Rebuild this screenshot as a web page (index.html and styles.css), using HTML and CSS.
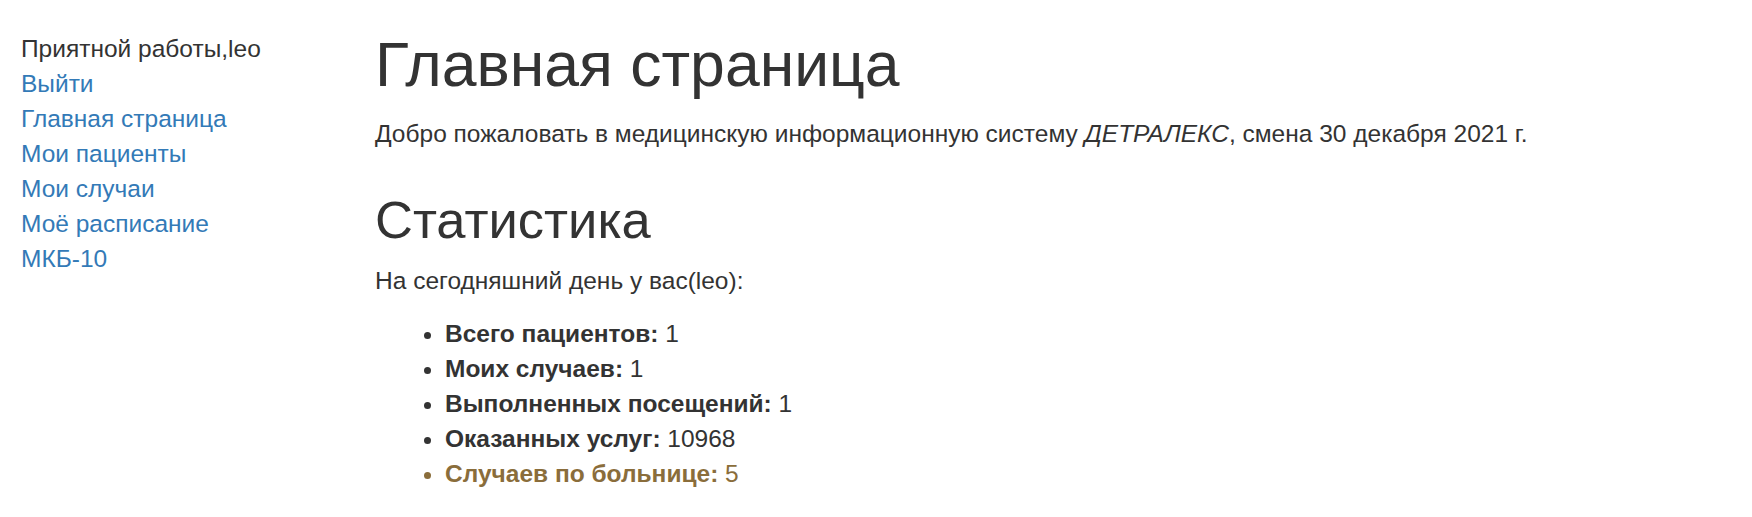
FILE: index.html
```html
<!DOCTYPE html>
<html lang="ru">
<head>
<meta charset="utf-8">
<title>Главная страница</title>
<link rel="stylesheet" href="styles.css">
</head>
<body>
<div class="page">
  <nav class="sidebar">
    <div class="greet">Приятной работы,leo</div>
    <a class="nav-link" href="#">Выйти</a>
    <a class="nav-link" href="#">Главная страница</a>
    <a class="nav-link" href="#">Мои пациенты</a>
    <a class="nav-link" href="#">Мои случаи</a>
    <a class="nav-link" href="#">Моё расписание</a>
    <a class="nav-link" href="#">МКБ-10</a>
  </nav>
  <main class="content">
    <h1 class="title">Главная страница</h1>
    <p class="text">Добро пожаловать в медицинскую информационную систему <em>ДЕТРАЛЕКС</em>, смена 30 декабря 2021 г.</p>
    <h2 class="subtitle">Статистика</h2>
    <p class="text">На сегодняшний день у вас(leo):</p>
    <ul class="stats">
      <li><b>Всего пациентов:</b> 1</li>
      <li><b>Моих случаев:</b> 1</li>
      <li><b>Выполненных посещений:</b> 1</li>
      <li><b>Оказанных услуг:</b> 10968</li>
      <li class="warn"><b>Случаев по больнице:</b> 5</li>
    </ul>
  </main>
</div>
</body>
</html>
```

FILE: styles.css
```css
html, body {
  margin: 0;
  padding: 0;
  background: #fff;
}
body {
  font-family: "Liberation Sans", Arial, "Helvetica Neue", sans-serif;
  font-size: 24.5px;
  line-height: 35px;
  color: #333;
}
.page {
  display: flex;
  padding-top: 31px;
}
.sidebar {
  width: 354px;
  flex: 0 0 354px;
  padding-left: 21px;
  display: flex;
  flex-direction: column;
}
.nav-link {
  color: #337ab7;
  text-decoration: none;
}
.content {
  flex: 1;
}
.title {
  font-size: 62.5px;
  line-height: 67px;
  font-weight: 400;
  margin: 0 0 18px;
}
.text {
  margin: 0 0 17.5px;
}
.subtitle {
  font-size: 52.5px;
  line-height: 58px;
  font-weight: 400;
  margin: 40px 0 14px;
}
.stats {
  margin: 18px 0 17.5px;
  padding-left: 70px;
}
.stats b {
  font-weight: 700;
}
.warn {
  color: #8a6d3b;
}
```
